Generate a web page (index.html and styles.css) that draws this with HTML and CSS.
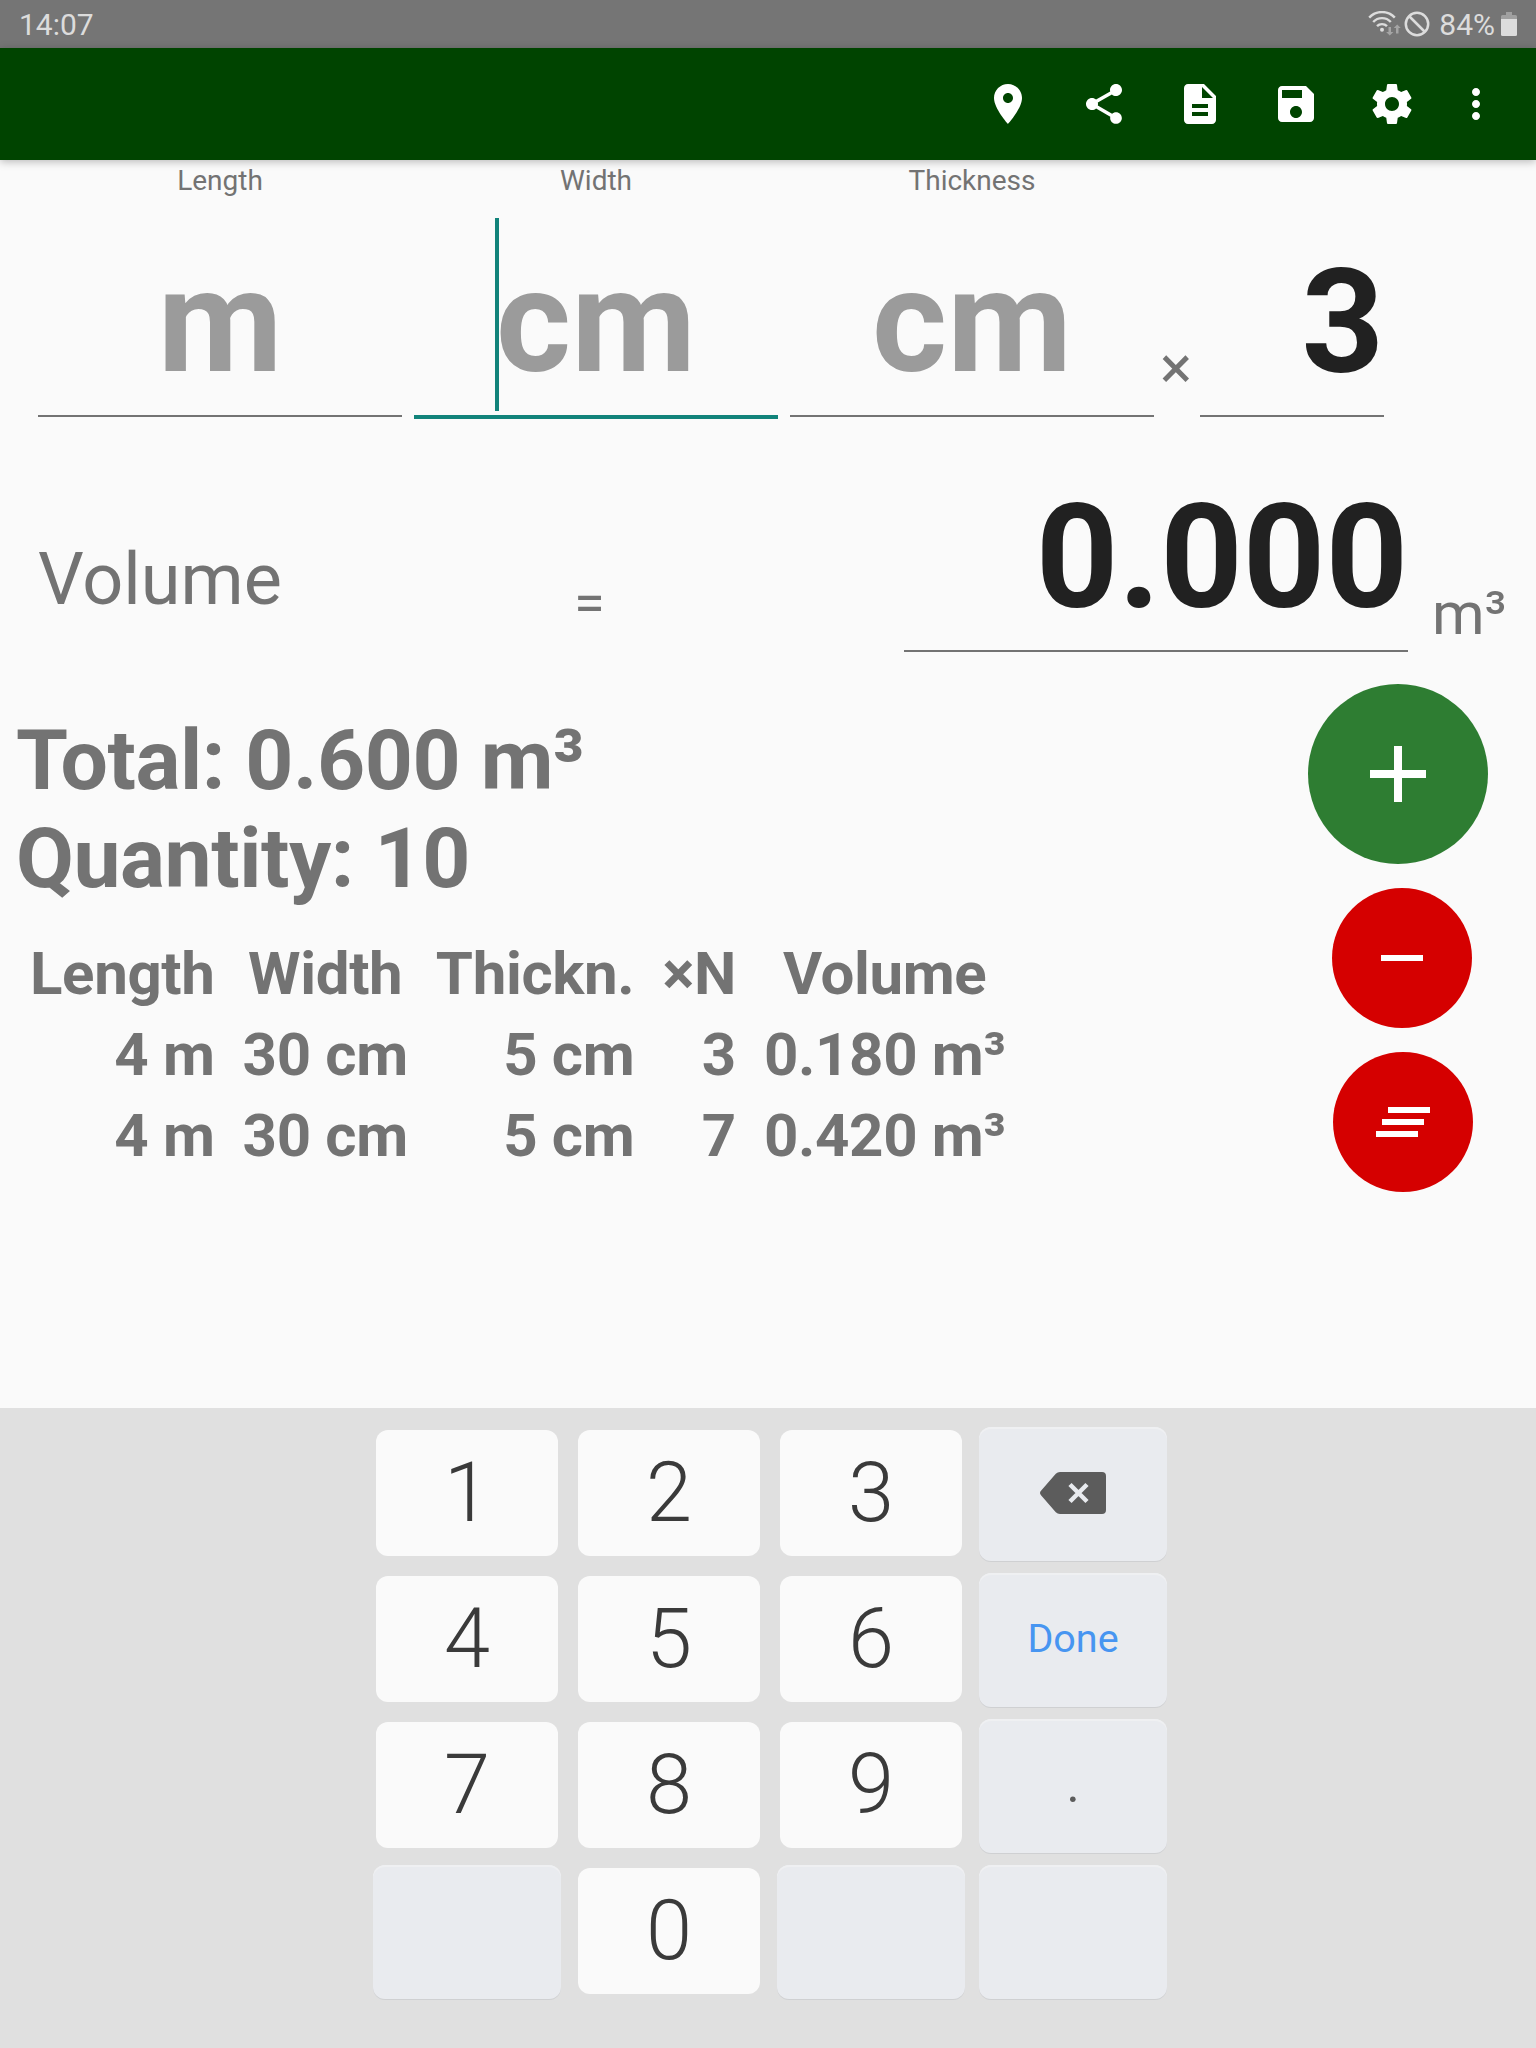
FILE: index.html
```html
<!DOCTYPE html>
<html lang="en">
<head>
    <meta charset="UTF-8">
    <title>Timber volume</title>
    <link rel="stylesheet" href="styles.css">
</head>
<body>
<div class="status-bar">
    <span class="clock">14:07</span>
    <div class="status-icons">
        <svg class="wifi" width="33" height="26" viewBox="0 0 33 26">
            <g fill="none" stroke="#dcdcdc" stroke-width="2.4">
                <path d="M1.2 6.6a17.500 17.500 0 0 1 25.600 0"/>
                <path d="M5.200 11a12 12 0 0 1 17.600 0"/>
                <path d="M9 15.200a7 7 0 0 1 10 0"/>
            </g>
            <circle cx="14" cy="18.800" r="2" fill="#dcdcdc"/>
            <path d="M20.500 16h2.500v5h2.400l-3.600 3.600-3.700-3.600h2.400zM28 22.500h2.500v-5.500h2.200L29.200 13.500 25.700 17H28z" fill="#a5a5a5"/>
        </svg>
        <svg class="blocked" width="26" height="26" viewBox="0 0 26 26" fill="none" stroke="#dcdcdc" stroke-width="2.500">
            <circle cx="13" cy="13" r="11.200"/>
            <path d="M5 5l16 16"/>
        </svg>
        <span>84%</span>
        <svg class="battery" width="16" height="24" viewBox="0 0 16 24">
            <path d="M5 0h6v3h3.500a1.500 1.500 0 0 1 1.500 1.500V7H0V4.500A1.500 1.500 0 0 1 1.500 3H5z" fill="#a0a0a0"/>
            <path d="M0 7h16v15.500a1.500 1.500 0 0 1-1.500 1.500h-13A1.500 1.500 0 0 1 0 22.500z" fill="#dcdcdc"/>
        </svg>
    </div>
</div>

<div class="app-bar">
    <svg viewBox="0 0 24 24"><path d="M12 2C8.130 2 5 5.130 5 9c0 5.250 7 13 7 13s7-7.750 7-13c0-3.870-3.130-7-7-7zm0 9.500c-1.380 0-2.500-1.120-2.500-2.500s1.120-2.500 2.500-2.500 2.500 1.120 2.500 2.500-1.120 2.500-2.500 2.500z"/></svg>
    <svg viewBox="0 0 24 24"><path d="M18 16.080c-.76 0-1.440.3-1.960.77L8.910 12.700c.05-.23.09-.46.09-.7s-.04-.47-.09-.7l7.050-4.110c.54.5 1.250.81 2.040.81 1.660 0 3-1.340 3-3s-1.340-3-3-3-3 1.340-3 3c0 .24.040.47.090.7L8.040 9.810C7.500 9.310 6.790 9 6 9c-1.660 0-3 1.340-3 3s1.340 3 3 3c.79 0 1.500-.31 2.040-.81l7.120 4.160c-.05.21-.08.43-.08.65 0 1.610 1.310 2.920 2.920 2.920s2.920-1.310 2.920-2.920-1.310-2.920-2.920-2.920z"/></svg>
    <svg viewBox="0 0 24 24"><path d="M14 2H6c-1.100 0-1.990.9-1.990 2L4 20c0 1.100.89 2 1.990 2H18c1.100 0 2-.9 2-2V8l-6-6zm2 16H8v-2h8v2zm0-4H8v-2h8v2zm-3-5V3.500L18.500 9H13z"/></svg>
    <svg viewBox="0 0 24 24"><path d="M17 3H5c-1.110 0-2 .9-2 2v14c0 1.100.89 2 2 2h14c1.100 0 2-.9 2-2V7l-4-4zm-5 16c-1.660 0-3-1.340-3-3s1.340-3 3-3 3 1.340 3 3-1.340 3-3 3zm3-10H5V5h10v4z"/></svg>
    <svg viewBox="0 0 24 24"><path d="M19.430 12.980c.04-.32.07-.64.07-.98s-.03-.66-.07-.98l2.110-1.650c.19-.15.24-.42.12-.64l-2-3.460c-.12-.22-.39-.3-.61-.22l-2.490 1c-.52-.4-1.080-.73-1.690-.98l-.38-2.650C14.460 2.180 14.250 2 14 2h-4c-.25 0-.46.18-.49.42l-.38 2.650c-.61.25-1.170.59-1.690.98l-2.490-1c-.23-.09-.49 0-.61.22l-2 3.460c-.13.22-.07.49.12.64l2.110 1.650c-.04.32-.07.65-.07.98s.03.66.07.98l-2.110 1.650c-.19.15-.24.42-.12.64l2 3.460c.12.22.39.3.61.22l2.490-1c.52.4 1.080.73 1.690.98l.38 2.650c.03.24.24.42.49.42h4c.25 0 .46-.18.49-.42l.38-2.650c.61-.25 1.170-.59 1.690-.98l2.490 1c.23.09.49 0 .61-.22l2-3.460c.12-.22.07-.49-.12-.64l-2.110-1.650zM12 15.500c-1.930 0-3.500-1.570-3.500-3.500s1.570-3.500 3.500-3.500 3.500 1.570 3.500 3.500-1.570 3.500-3.500 3.500z"/></svg>
    <svg class="overflow" viewBox="0 0 24 24"><path d="M12 8c1.100 0 2-.9 2-2s-.9-2-2-2-2 .9-2 2 .9 2 2 2zm0 2c-1.100 0-2 .9-2 2s.9 2 2 2 2-.9 2-2-.9-2-2-2zm0 6c-1.100 0-2 .9-2 2s.9 2 2 2 2-.9 2-2-.9-2-2-2z"/></svg>
</div>

<div class="content">
    <div class="dimensions">
        <div class="dimension">
            <div class="label">Length</div>
            <div class="field hint">m</div>
        </div>
        <div class="dimension">
            <div class="label">Width</div>
            <div class="field hint active">cm<span class="caret"></span></div>
        </div>
        <div class="dimension">
            <div class="label">Thickness</div>
            <div class="field hint">cm</div>
        </div>
        <div class="times">×</div>
        <div class="field count">3</div>
    </div>

    <div class="result">
        <div class="result-name">Volume</div>
        <div class="equals">=</div>
        <div class="result-value">0.000</div>
        <div class="result-unit">m³</div>
    </div>

    <div class="list">
        <div class="summary">
            <div class="total">Total: 0.600 m³<br>Quantity: 10</div>
            <table class="pieces">
                <tr><th>Length</th><th>Width</th><th>Thickn.</th><th>×N</th><th>Volume</th></tr>
                <tr><td>4 m</td><td>30 cm</td><td>5 cm</td><td>3</td><td>0.180 m³</td></tr>
                <tr><td>4 m</td><td>30 cm</td><td>5 cm</td><td>7</td><td>0.420 m³</td></tr>
            </table>
        </div>
        <div class="actions">
            <div class="fab add"><svg viewBox="0 0 24 24"><path d="M19 13h-6v6h-2v-6H5v-2h6V5h2v6h6v2z"/></svg></div>
            <div class="fab remove"><svg viewBox="0 0 24 24"><path d="M19 13H5v-2h14v2z"/></svg></div>
            <div class="fab clear"><svg viewBox="0 0 24 24"><path d="M5 13h14v-2H5v2zm-2 4h14v-2H3v2zM7 7v2h14V7H7z"/></svg></div>
        </div>
    </div>
</div>

<div class="keyboard">
    <div class="key">1</div>
    <div class="key">2</div>
    <div class="key">3</div>
    <div class="key fn">
        <svg width="66" height="42" viewBox="0 0 66 42">
            <path d="M20 0h42a4 4 0 0 1 4 4v34a4 4 0 0 1-4 4H20q-2.500 0-4.200-1.800L1 23.200q-2-2.200 0-4.400L15.800 1.800Q17.500 0 20 0z" fill="#5c5c5c"/>
            <path d="M30 12.500l17 17M47 12.500l-17 17" stroke="#e9ebef" stroke-width="4.500"/>
        </svg>
    </div>
    <div class="key">4</div>
    <div class="key">5</div>
    <div class="key">6</div>
    <div class="key fn done">Done</div>
    <div class="key">7</div>
    <div class="key">8</div>
    <div class="key">9</div>
    <div class="key fn dot">.</div>
    <div class="key fn"></div>
    <div class="key">0</div>
    <div class="key fn"></div>
    <div class="key fn"></div>
</div>
</body>
</html>
```

FILE: styles.css
```css
* {
    box-sizing: border-box;
}

body {
    background: #fafafa;
    color: #737373;
    display: flex;
    flex-direction: column;
    font-family: Roboto, sans-serif;
    height: 2048px;
    margin: 0;
    width: 1536px;
}

svg {
    display: block;
}

.status-bar {
    background: #757575;
    color: #dcdcdc;
    display: flex;
    font-size: 30px;
    height: 48px;
    justify-content: space-between;
    line-height: 49px;
    padding: 0 19px;
}

.status-icons {
    align-items: center;
    display: flex;
}

.blocked {
    margin: 0 9px 0 3px;
}

.battery {
    margin-left: 6px;
}

.app-bar {
    align-items: center;
    background: #004400;
    box-shadow: 0 2px 8px rgba(0, 0, 0, 0.25);
    display: flex;
    gap: 48px;
    height: 112px;
    justify-content: flex-end;
    padding-right: 36px;
}

.app-bar svg {
    fill: #fff;
    height: 48px;
    width: 48px;
}

.app-bar .overflow {
    margin-left: -12px;
}

.content {
    flex: 1;
}

.dimensions {
    align-items: flex-start;
    display: flex;
    gap: 12px;
    height: 280px;
    padding-left: 38px;
}

.dimension {
    width: 364px;
}

.label {
    font-size: 28px;
    line-height: 41px;
    text-align: center;
}

.field {
    border-bottom: 2px solid #737373;
    color: #212121;
    font-size: 144px;
    font-weight: bold;
    line-height: 169px;
    padding: 36px 0 9px;
    position: relative;
    text-align: center;
}

.hint {
    color: #9b9b9b;
}

.active {
    border-bottom: 4px solid #11837a;
}

.caret {
    background: #11837a;
    height: 193px;
    left: 81px;
    position: absolute;
    top: 17px;
    width: 4px;
}

.times {
    font-size: 60px;
    line-height: 70px;
    margin-left: -7px;
    padding-top: 173px;
    text-align: center;
    width: 34px;
}

.count {
    margin-left: -5px;
    margin-top: 41px;
    padding: 37px 0 8px;
    text-align: right;
    width: 184px;
}

.result {
    align-items: flex-end;
    display: flex;
    height: 212px;
    padding-left: 38px;
}

.result-name {
    font-size: 72px;
    line-height: 84px;
    padding-bottom: 30px;
    width: 536px;
}

.equals {
    font-size: 56px;
    line-height: 66px;
    padding-bottom: 16px;
    width: 330px;
}

.result-value {
    border-bottom: 2px solid #737373;
    color: #212121;
    font-size: 144px;
    font-weight: bold;
    line-height: 169px;
    padding-bottom: 8px;
    text-align: right;
    width: 504px;
}

.result-unit {
    font-size: 60px;
    line-height: 70px;
    padding: 0 0 3px 24px;
}

.list {
    display: flex;
    justify-content: space-between;
    padding: 32px 48px 0 16px;
}

.summary {
    padding-top: 28px;
}

.total {
    font-size: 84px;
    font-weight: bold;
    letter-spacing: -0.45px;
    line-height: 98px;
}

.pieces {
    border-collapse: collapse;
    font-size: 60px;
    font-weight: bold;
    letter-spacing: -0.35px;
    line-height: 81px;
    margin-top: 25px;
}

.pieces th,
.pieces td {
    padding: 0 14px;
    white-space: nowrap;
}

.pieces td {
    text-align: right;
}

.actions {
    align-items: center;
    display: flex;
    flex-direction: column;
    gap: 24px;
}

.fab {
    align-items: center;
    background: #d50000;
    border-radius: 50%;
    display: flex;
    height: 140px;
    justify-content: center;
    width: 140px;
}

.fab svg {
    fill: #fff;
    height: 72px;
    width: 72px;
}

.add {
    background: #2e7d32;
    height: 180px;
    width: 180px;
}

.add svg {
    height: 96px;
    width: 96px;
}

.remove {
    margin-left: 8px;
}

.clear {
    margin-left: 10px;
}

.keyboard {
    background: #e0e0e0;
    display: grid;
    gap: 20px;
    grid-template-columns: repeat(4, 182px);
    grid-template-rows: repeat(4, 126px);
    height: 640px;
    padding: 22px 0 0 376px;
}

.key {
    background: #fafafa;
    border-radius: 12px;
    color: #3a3a3a;
    font-size: 83px;
    font-weight: 300;
    line-height: 126px;
    text-align: center;
}

.fn {
    align-items: center;
    background: #e9ebef;
    box-shadow: inset 0 2px 0 #eff0f2, 0 1px 0 #cfd0d2;
    display: flex;
    font-weight: normal;
    justify-content: center;
    margin: -3px -3px -5px;
    padding-bottom: 2px;
}

.done {
    color: #4795f1;
    font-size: 39.5px;
}

.dot {
    color: #5c5c5c;
    font-size: 50px;
}
```
